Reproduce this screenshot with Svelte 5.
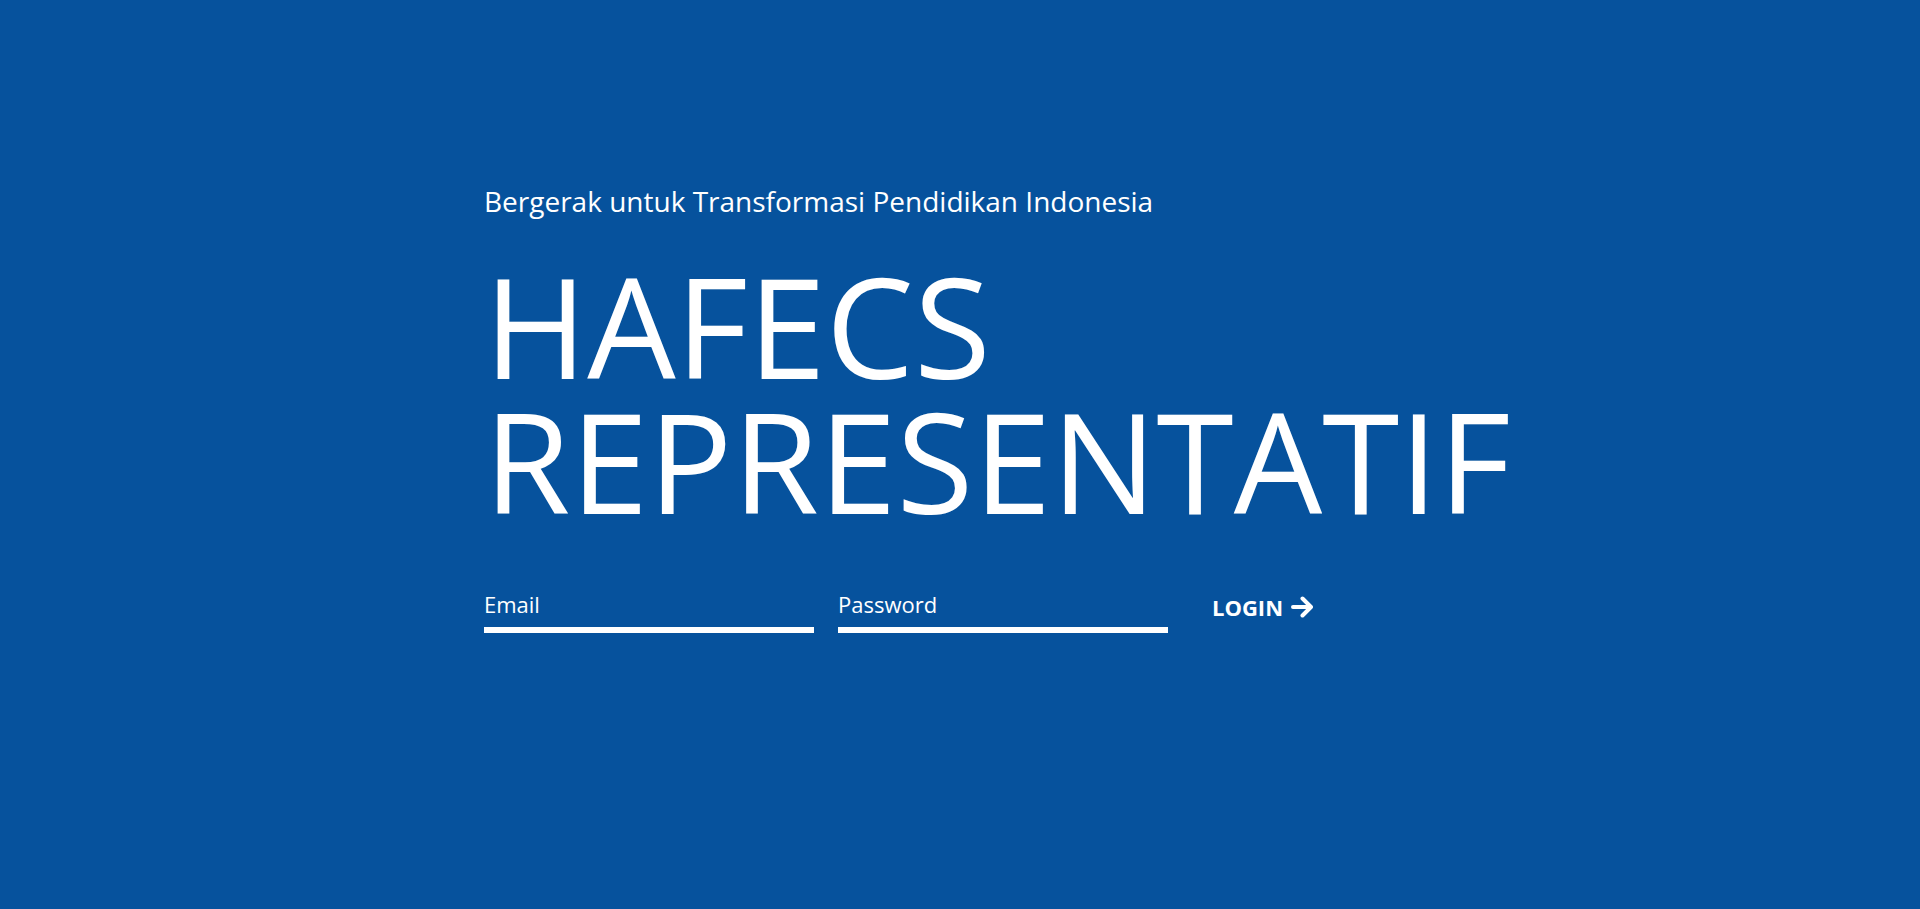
<script>
  let email = $state('');
  let password = $state('');
</script>

<main>
  <div class="content">
    <p class="tagline">Bergerak untuk Transformasi Pendidikan Indonesia</p>
    <h1>HAFECS REPRESENTATIF</h1>
    <form onsubmit={(e) => e.preventDefault()}>
      <input type="email" aria-label="Email" placeholder="Email" bind:value={email} />
      <input type="password" aria-label="Password" placeholder="Password" bind:value={password} />
      <button type="submit">
        LOGIN
        <svg viewBox="0 0 22 22" aria-hidden="true">
          <path d="M2 11H19M11.500 2.500L20 11L11.500 19.500" />
        </svg>
      </button>
    </form>
  </div>
</main>

<style>
  :global(body) {
    margin: 0;
    background: #06529d;
  }
  main {
    min-height: 100vh;
    box-sizing: border-box;
    padding: 183px 24px 24px;
    background: #06529d;
    color: #fff;
    font-family: "Open Sans", "Noto Sans", sans-serif;
  }
  .content {
    max-width: 1120px;
    box-sizing: border-box;
    margin: 0 auto;
    padding-left: 84px;
  }
  .tagline {
    margin: 0;
    font-size: 28px;
    line-height: 36px;
  }
  h1 {
    margin: 38px 0 0;
    font-size: 140px;
    line-height: 135px;
    font-weight: 400;
  }
  form {
    display: flex;
    flex-wrap: wrap;
    gap: 24px;
    margin-top: 61px;
  }
  input {
    width: 330px;
    box-sizing: border-box;
    padding: 0 0 7px;
    border: 0;
    border-bottom: 6px solid #fff;
    border-radius: 0;
    background: transparent;
    color: inherit;
    font: inherit;
    font-size: 22px;
    line-height: 32px;
    outline: none;
  }
  input::placeholder {
    color: #fff;
    opacity: 1;
  }
  button {
    display: flex;
    align-items: center;
    gap: 8px;
    padding: 0 20px 8px;
    border: 0;
    background: transparent;
    color: inherit;
    font: inherit;
    font-size: 22px;
    font-weight: 700;
    cursor: pointer;
  }
  svg {
    width: 22px;
    height: 22px;
    fill: none;
    stroke: currentColor;
    stroke-width: 4;
    stroke-linecap: round;
    stroke-linejoin: round;
  }
</style>
